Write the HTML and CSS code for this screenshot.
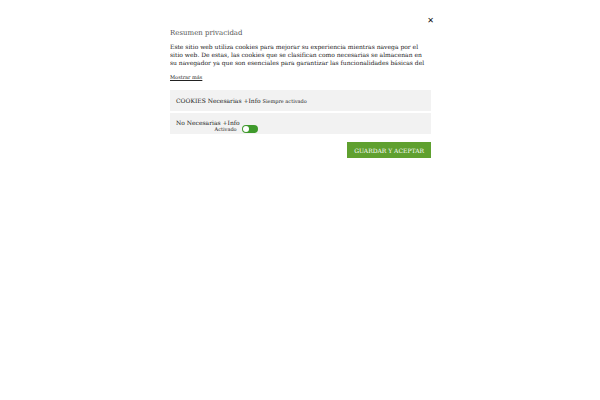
FILE: index.html
```html
<!DOCTYPE html>
<html lang="es">
<head>
<meta charset="utf-8">
<link rel="stylesheet" href="styles.css">
</head>
<body>
<div class="modal">
  <div class="close-row"><span class="close">✕</span></div>
  <h2 class="title">Resumen privacidad</h2>
  <p class="desc">Este sitio web utiliza cookies para mejorar su experiencia mientras navega por el sitio web. De estas, las cookies que se clasifican como necesarias se almacenan en su navegador ya que son esenciales para garantizar las funcionalidades básicas del</p>
  <a class="more" href="#">Mostrar más</a>
  <div class="cat">
    <span class="cat-name">COOKIES Necesarias +Info</span>
    <span class="always">Siempre activado</span>
  </div>
  <div class="cat cat2">
    <span class="cat-name">No Necesarias +Info</span>
    <span class="toggle-wrap"><span class="toggle-label">Activado</span><span class="toggle"><span class="knob"></span></span></span>
  </div>
  <div class="actions"><button class="save">GUARDAR Y ACEPTAR</button></div>
</div>
</body>
</html>
```
FILE: styles.css
```css
html, body { margin: 0; padding: 0; background: #fff; }
body { font-family: "DejaVu Serif", serif; color: #222; }
.modal { width: 261px; margin: 0 0 0 170px; padding-top: 14px; }
.close-row { display: flex; justify-content: flex-end; height: 14px; }
.close { font-family: "DejaVu Sans", sans-serif; font-size: 8px; font-weight: bold; color: #111; margin-right: -3px; line-height: 14px; }
.title { font-size: 7px; font-weight: normal; color: #555; margin: 0 0 5px; line-height: 10px; }
.desc { font-size: 6px; line-height: 8px; height: 24px; overflow: hidden; margin: 0 0 6px; padding-right: 5px; color: #1a1a1a; }
.more { display: block; font-size: 5px; color: #222; line-height: 8px; margin-bottom: 9px; }
.cat { background: #f2f2f2; height: 21px; display: flex; align-items: center; padding: 0 6px; margin-bottom: 2px; font-size: 6px; color: #222; }
.always { font-size: 5px; margin-left: 2px; }
.cat2 { align-items: flex-start; padding-top: 6px; box-sizing: border-box; }
.toggle-wrap { display: flex; align-items: center; margin-top: 6px; margin-left: -25px; }
.toggle-label { font-size: 5px; margin-right: 5px; }
.toggle { width: 16px; height: 8px; border-radius: 4px; background: #3f9a2c; display: block; position: relative; }
.knob { position: absolute; left: 1px; top: 1px; width: 6px; height: 6px; border-radius: 50%; background: #fff; }
.actions { display: flex; justify-content: flex-end; margin-top: 8px; }
.save { background: #5fa02f; color: #fff; border: 0; font-family: "DejaVu Serif", serif; font-size: 6px; height: 16px; padding: 0 7px; }
```
